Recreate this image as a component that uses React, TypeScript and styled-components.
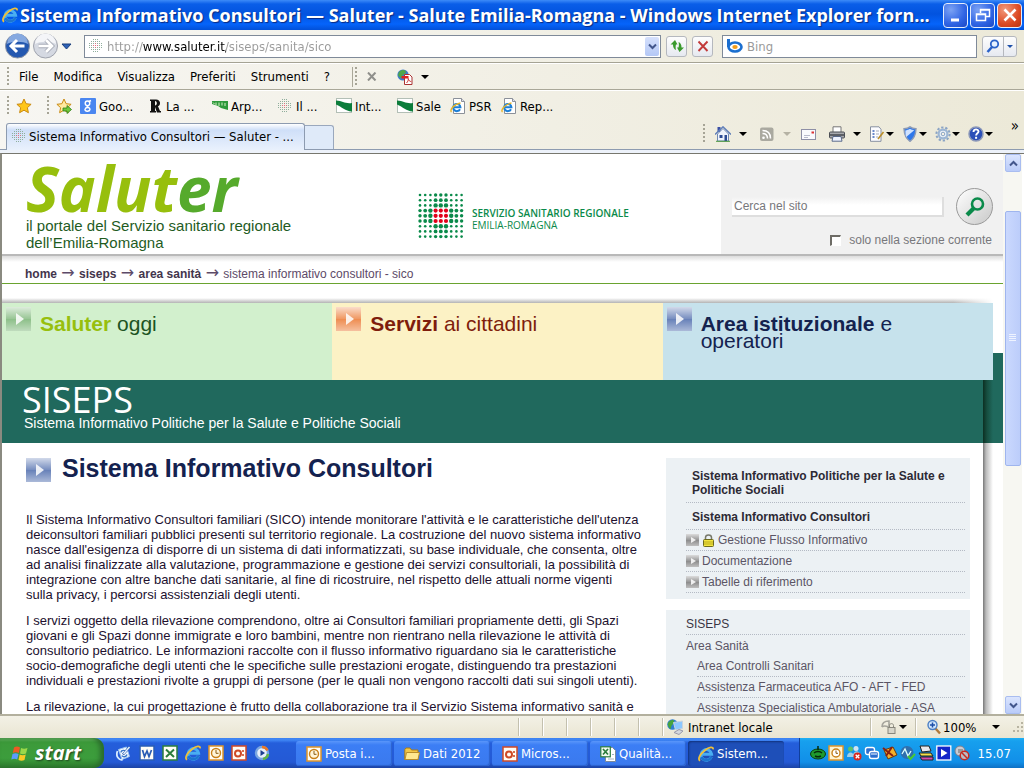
import React from 'react';
import styled, { createGlobalStyle } from 'styled-components';

const UI_FONT = '"DejaVu Sans Condensed", "DejaVu Sans", "Noto Sans", sans-serif';
const WEB_FONT = '"Liberation Sans", Arial, sans-serif';
const HUMANIST = '"Open Sans", "Noto Sans", sans-serif';

const GlobalStyle = createGlobalStyle`
  *, *::before, *::after { box-sizing: border-box; }
  html, body { margin: 0; height: 100%; }
  body { font-family: ${WEB_FONT}; font-size: 12px; overflow: hidden; }
  #root { height: 100%; }
  button, input { font: inherit; color: inherit; }
  button { padding: 0; border: 0; background: none; white-space: nowrap; }
  a { color: inherit; text-decoration: none; }
  p, h1, h2 { margin: 0; padding: 0; }
  svg { display: block; flex: none; }
`;

/* ---------- icons ---------- */

const Pic = ({ children, w = 16, h = 16 }: { children: React.ReactNode; w?: number; h?: number }) => (
  <svg width={w} height={h} viewBox={`0 0 ${w} ${h}`} aria-hidden="true">{children}</svg>
);

const Explorer = () => (
  <Pic>
    <path d="M13.300 10.800A5.300 5.300 0 1 1 13.600 8.300H4.500" fill="none" stroke="#49aef2" strokeWidth="3" />
    <path d="M13.300 10.800A5.300 5.300 0 0 1 3.500 11" fill="none" stroke="#1c74cf" strokeWidth="2.400" />
    <path d="M2.200 14.600C-.8 13.500 2 8 7 4.200 11 1 15.600 .4 15 3.400" fill="none" stroke="#efc03a" strokeWidth="1.800" />
  </Pic>
);

const IePage = () => (
  <Pic>
    <path d="M3.500 .5h8l3 3v12h-11z" fill="#fff" stroke="#8b9099" />
    <path d="M11.500 .5v3h3" fill="#dde" stroke="#8b9099" />
    <path d="M10 11.200A3.600 3.600 0 1 1 10.400 9.200H4" fill="none" stroke="#1c7fd6" strokeWidth="2" />
    <path d="M1.500 14C-.5 12.500 3 6.500 10.500 5" fill="none" stroke="#e9b52a" strokeWidth="1.400" />
  </Pic>
);

const dotRadius = (r: number, c: number) => {
  const a = Math.abs(r - 4);
  const b = Math.abs(c - 4);
  if (a <= 1 && b <= 1) return 2.1;
  if (a <= 1 || b <= 1) return [0, 0, 2.2, 1.9, 1.7][Math.max(a, b)];
  return 1.3;
};

const DotGrid = ({ size }: { size: number }) => (
  <svg width={size} height={size} viewBox="0 0 46 46" aria-hidden="true">
    {Array.from({ length: 81 }, (_, i) => {
      const r = Math.floor(i / 9);
      const c = i % 9;
      const red = Math.abs(r - 4) <= 1 && Math.abs(c - 4) <= 1;
      return (
        <circle key={i} cx={2 + c * 5.2} cy={2 + r * 5.2} r={dotRadius(r, c)} fill={red ? '#e2001a' : '#0a8a4a'} />
      );
    })}
  </svg>
);

const FaintDots = () => (
  <Pic>
    {Array.from({ length: 49 }, (_, i) => {
      const r = Math.floor(i / 7);
      const c = i % 7;
      const far = Math.abs(r - 3) + Math.abs(c - 3);
      if (far > 4) return null;
      return <rect key={i} x={1 + c * 2} y={1 + r * 2} width="1" height="1" fill={far < 2 ? '#e07080' : '#8fae9c'} />;
    })}
  </Pic>
);

const Star = ({ arrow }: { arrow?: boolean }) => (
  <Pic>
    <path d="M8 1l2.100 4.700 5 .6-3.700 3.400 1 5L8 12.200 3.600 14.700l1-5L.9 6.300l5-.6z" fill={arrow ? '#ffe9a0' : '#ffc61a'} stroke="#c98a12" />
    {arrow && <path d="M7 10h4V7.500l4.500 4-4.500 4V13H7z" fill="#6fc73b" stroke="#2f7d18" strokeWidth=".8" />}
  </Pic>
);

const Google = () => (
  <Pic>
    <rect width="16" height="16" rx="1" fill="#4a86f0" />
    <circle cx="7.500" cy="5.300" r="2.300" fill="none" stroke="#fff" strokeWidth="1.400" />
    <path d="M9 3.500l2-1M7.500 7.500c-2 1.500 3 1.500 2.500 4s-5.500 2-5 0 3-2 4-1.800" fill="none" stroke="#fff" strokeWidth="1.400" />
  </Pic>
);

const Repubblica = () => (
  <Pic>
    <path fillRule="evenodd" d="M3 1.500h6c5 0 5 6 2 6.800L13 13h1v1.500h-4L8 9v4h1v1.500H3V13h1V3H3zM8 3v4.500c2.500 0 2.500-4.500 0-4.500z" fill="#111" />
  </Pic>
);

const Arpa = () => (
  <Pic>
    <path d="M0 3h16v9L9 10 6 8 0 6z" fill="#2f9a3c" />
    <path d="M1 4.500l1.500 1.500M4 4.500v3M7 4.500v3.500M10 4.500v3M13 5v3" stroke="#d7f0c8" />
  </Pic>
);

const Region = () => (
  <Pic>
    <rect x=".5" y=".5" width="15" height="14" fill="#fff" stroke="#b3bfb6" />
    <path d="M0 2.500C7 3 9 6 16 5v8.500C9 13 6 9 0 6.500z" fill="#0c7d3b" />
  </Pic>
);

const Lens = () => (
  <Pic>
    <circle cx="9.500" cy="6" r="3.700" fill="#e6f1ff" stroke="#2b62c8" strokeWidth="1.800" />
    <path d="M7 9l-4.500 5" stroke="#2b62c8" strokeWidth="2.600" />
  </Pic>
);

const ZoomLens = () => (
  <Pic>
    <path d="M9.500 9.500l4.500 5" stroke="#b07a3a" strokeWidth="2.400" />
    <circle cx="6.500" cy="6" r="4.500" fill="#cfe4fb" stroke="#4b7fc4" strokeWidth="1.400" />
    <path d="M6.500 3.500v5M4 6h5" stroke="#1d4fa8" strokeWidth="1.500" />
  </Pic>
);

const Bing = () => (
  <Pic w={18}>
    <path d="M2.500 1v8" stroke="#1b6fd0" strokeWidth="3" />
    <ellipse cx="9" cy="9" rx="6.500" ry="4.500" fill="#fff" stroke="#1b6fd0" strokeWidth="2.600" />
    <ellipse cx="9" cy="9" rx="2.700" ry="2" fill="#f39c1a" />
  </Pic>
);

const House = () => (
  <Pic>
    <path d="M2.500 1h3v5h-3z" fill="#3b4fa5" />
    <path d="M2.500 8L8 2.500 13.500 8v7h-11z" fill="#eef3fc" stroke="#6f88b5" />
    <path d="M0 8.500L8 .8l8 7.700" fill="none" stroke="#5e7db8" strokeWidth="1.400" />
    <path d="M4.500 9h3v3h-3zM9.500 9h2.500v6H9.500z" fill="#2b4b93" />
    <path d="M1 15.300h14" stroke="#4c9a3a" />
  </Pic>
);

const Rss = () => (
  <Pic>
    <rect x="1" y="1.500" width="13.500" height="13.500" rx="2" fill="#aaa9a0" />
    <circle cx="4.500" cy="11.800" r="1.300" fill="#fff" />
    <path d="M3.500 7.500c3 0 5 2 5 5M3.500 4.500c5 0 8 3 8 8" fill="none" stroke="#fff" strokeWidth="1.500" />
  </Pic>
);

const Mail = () => (
  <Pic>
    <rect x=".5" y="3.500" width="14" height="10" fill="#fafafd" stroke="#8e8fa6" />
    <path d="M10.500 5.500h2.500v2h-2.500z" fill="#d33" />
    <path d="M3 9.500h6M3 11.500h4" stroke="#b9bbcc" />
  </Pic>
);

const Printer = () => (
  <Pic>
    <path d="M4 6V.8h8V6" fill="#fff" stroke="#777" />
    <rect x=".5" y="6" width="15" height="6" rx="1" fill="#a7a9ad" stroke="#4b4e55" />
    <path d="M1 9h14" stroke="#45484f" strokeWidth="1.500" />
    <path d="M4 10.500h8l1 4.700H3z" fill="#f0f4ff" stroke="#5a6a8a" />
  </Pic>
);

const PageIcon = () => (
  <Pic>
    <path d="M1.500 .8h8.500l2 2.500v12H1.500z" fill="#fcfcff" stroke="#8890a0" />
    <path d="M3.500 5h2M3.500 8h2M3.500 11h2" stroke="#3a62b8" strokeWidth="1.400" />
    <path d="M7 5h3M7 8h3M7 11h2" stroke="#a5abb8" />
    <path d="M9 13l5.500-7" stroke="#b98d2a" strokeWidth="1.600" />
  </Pic>
);

const Shield = () => (
  <Pic>
    <path d="M8 .8c2 1.700 4 2 6 2-.2 6-1.500 9.500-6 12.500C3.500 12.300 2.200 8.800 2 2.800c2 0 4-.3 6-2z" fill="#2f78ea" stroke="#8d9bb5" strokeWidth="1.400" />
    <path d="M8 2.800c1.500 1 2.700 1.300 4.200 1.500L4.200 11C3.700 9 3.400 7 3.400 4.400 5 4.200 6.500 3.800 8 2.800z" fill="#cfe2ff" />
  </Pic>
);

const Gear = () => (
  <Pic>
    <circle cx="8" cy="8" r="6.600" fill="none" stroke="#8ba4c4" strokeWidth="2" strokeDasharray="2.300 1.850" />
    <circle cx="8" cy="8" r="4.400" fill="#eef4fa" stroke="#9db6d4" strokeWidth="2.200" />
    <circle cx="8" cy="8" r="1.800" fill="#f5f2e6" stroke="#8ba4c4" />
  </Pic>
);

const Help = () => (
  <Pic>
    <circle cx="8" cy="8" r="7" fill="#2c50b8" stroke="#8c98b8" strokeWidth="1.500" />
    <path d="M5.500 6c0-3.500 5-3.200 5-.5 0 1.800-2.400 1.800-2.400 4" fill="none" stroke="#fff" strokeWidth="1.900" />
    <path d="M7.100 10.800h2v2h-2z" fill="#fff" />
  </Pic>
);

const GlobePdf = () => (
  <Pic>
    <circle cx="6" cy="6" r="5.600" fill="#3c7bc8" />
    <path d="M2 3c3-3 7-2 7 0S5 5 5 8 1 7 1 6z" fill="#4ea64a" />
    <path d="M7.500 5.500h5l2.500 2.500v7.500H7.500z" fill="#fff" stroke="#a33" />
    <path d="M4.500 7h7v2.500h-7z" fill="#d22" />
    <path d="M9.500 14c1.500-1.500 2-3 1.700-4.500.5 2 1.500 3 3 3" fill="none" stroke="#c33" />
  </Pic>
);

const Windows = () => (
  <Pic w={19} h={17}>
    <path d="M3 2.500c2-1.200 4-1.200 6 0L7.800 8C6 7 4 7 1.800 8z" fill="#ee5a24" />
    <path d="M10 3c2 1 4 1 6.500 0L15 8.500c-2 1-4 1-6 0z" fill="#9bd84a" />
    <path d="M1.500 9c2-1 4-1 6 0l-1.300 5.500C4.500 13.500 2.500 13.500.3 14.500z" fill="#5a9cff" />
    <path d="M8.700 9.500c2 1 4 1 6 0L13.500 15c-2 1-4 1-6 0z" fill="#fbc926" />
  </Pic>
);

const Office = ({ kind }: { kind: 'word' | 'excel' | 'outlook' | 'point' }) => {
  const tone = { word: '#2a5db4', excel: '#2c7d3c', outlook: '#e0952a', point: '#cf4a26' }[kind];
  return (
    <Pic>
      <rect x="1" y="1" width="14" height="14" fill="#fffdf6" stroke={tone} strokeWidth="1.500" />
      {kind === 'word' && <path d="M3.500 5l2 6.500L8 6l2 5.500L12.500 5" fill="none" stroke={tone} strokeWidth="1.700" />}
      {kind === 'excel' && <path d="M4 4.500l8 7.500M12 4.500L4 12" stroke={tone} strokeWidth="2" />}
      {kind === 'outlook' && (
        <>
          <circle cx="8" cy="8" r="4.500" fill="#fff6da" stroke="#c98018" strokeWidth="1.400" />
          <path d="M8 5v3.300h2.500" fill="none" stroke="#8a5a10" />
        </>
      )}
      {kind === 'point' && (
        <>
          <circle cx="7" cy="8.500" r="3" fill="none" stroke={tone} strokeWidth="2" />
          <path d="M12 5v2M12 9v2" stroke={tone} strokeWidth="1.600" />
        </>
      )}
    </Pic>
  );
};

const ExcelFile = () => (
  <Pic>
    <path d="M5.500 1.500h7l3 3v11h-10z" fill="#fff" stroke="#7d8a9a" />
    <rect x=".8" y=".8" width="9.500" height="10" fill="#f4fbf2" stroke="#2c7d3c" strokeWidth="1.200" />
    <path d="M3 3l5 5.500M8 3L3 8.500" stroke="#2c7d3c" strokeWidth="1.700" />
    <path d="M8 13h6M12 8.500h2" stroke="#9fb0c0" />
  </Pic>
);

const Folder = () => (
  <Pic>
    <path d="M.8 13.500V3.500L2 2h4l1.500 2H14v9.500z" fill="#f3c747" stroke="#a87c1a" />
    <path d="M1 13.500l1.500-7h13l-1.500 7z" fill="#ffe890" stroke="#b98d2a" />
  </Pic>
);

const Desktop = () => (
  <Pic>
    <path d="M2.500 4.500L10.500 2l3 9.500L6 14.500z" fill="#f5fbff" stroke="#9cc5f0" />
    <path d="M5 7.500c0-2.500 4.500-3 5-.5M6 10.500c1 2 4.500 1.500 5-1" fill="none" stroke="#3b78c8" strokeWidth="1.400" />
    <path d="M7 9.500L13.500 2" stroke="#2b5aa8" strokeWidth="2.600" />
    <path d="M7.500 9L13.500 2" stroke="#e2f1ff" strokeWidth="1.500" />
    <path d="M1.500 6c-2 5 1 9 5 9" fill="none" stroke="#d8ecff" strokeWidth="1.800" />
  </Pic>
);

const Player = () => (
  <Pic>
    <circle cx="8" cy="8" r="6" fill="#e8f0fb" stroke="#7aa6e0" strokeWidth="2.400" />
    <path d="M8 2a6 6 0 0 1 5.500 3.500" fill="none" stroke="#e8792a" strokeWidth="2.400" />
    <path d="M14 9a6 6 0 0 1-5 5" fill="none" stroke="#62b545" strokeWidth="2.400" />
    <path d="M6.500 5l4.500 3-4.500 3z" fill="#1d3f90" />
  </Pic>
);

const Network = () => (
  <Pic w={17}>
    <circle cx="5.500" cy="5.500" r="5.300" fill="#2f7fd0" />
    <path d="M1 4c2-3 6-4 6-1.500S4 6 4 9 0 6.500 1 4z" fill="#46a43c" />
    <path d="M6.500 3.500l9-1.500v7.500l-7 1.500z" fill="#8cc8ff" stroke="#c9d4de" />
    <path d="M7 13.500l5-3 4 1.500-4 3.500z" fill="#d5d8de" stroke="#99a" />
  </Pic>
);

const PhishLock = () => (
  <Pic>
    <path d="M1 8C1 4 4 2 8 2v5M1 8c2-2 4-1 7 0" fill="none" stroke="#a5a49c" strokeWidth="1.600" />
    <rect x="7" y="8.500" width="7" height="6" fill="#d8d6ca" stroke="#88877c" />
    <path d="M8.500 8.500v-2c0-2.500 4-2.500 4 0v2" fill="none" stroke="#88877c" />
  </Pic>
);

const Padlock = () => (
  <Pic w={13} h={13}>
    <path d="M3.500 6V3.500c0-3.500 6-3.500 6 0V6" fill="none" stroke="#77796a" strokeWidth="1.500" />
    <rect x="1.500" y="5.500" width="10" height="7" rx="1" fill="#f3e63e" stroke="#6c6a1c" />
    <path d="M2 8h9M2 10h9" stroke="#b8a91e" />
  </Pic>
);

const SizeGrip = () => (
  <Pic w={12} h={12}>
    {[[9, 1], [5, 5], [9, 5], [1, 9], [5, 9], [9, 9]].map(([x, y]) => (
      <rect key={`${x}-${y}`} x={x} y={y} width="2" height="2" fill="#b8b4a2" />
    ))}
  </Pic>
);

const trayIcons: React.ReactNode[] = [
  <><ellipse cx="8" cy="9" rx="7.500" ry="5" fill="#1f9a2e" stroke="#0a3d10" /><path d="M4 8c2-2 6-2 8 0M5 11c2 1 4 1 6 0M8 1v4" fill="none" stroke="#062a0a" strokeWidth="1.500" /></>,
  <><rect x="1" y="1" width="14" height="14" fill="#fff3cf" stroke="#e0952a" strokeWidth="1.500" /><circle cx="8" cy="8" r="4" fill="#fff" stroke="#c98018" strokeWidth="1.400" /><path d="M8 5.500v2.800h2" fill="none" stroke="#8a5a10" /></>,
  <><circle cx="4.500" cy="4" r="2.500" fill="#5cc06a" /><circle cx="10" cy="3.500" r="2.500" fill="#cfe4f5" /><path d="M1 12c0-6 7-6 7 0zM7 11c0-6 7-6 7-1z" fill="#9fd0e8" /><circle cx="11.500" cy="11.500" r="4" fill="#d9261c" /><path d="M9.700 9.700l3.600 3.600M13.300 9.700l-3.600 3.600" stroke="#fff" strokeWidth="1.300" /></>,
  <><rect x="1.500" y="2.500" width="9" height="7" rx="2" fill="#2b6fd0" stroke="#fff" strokeWidth="1.400" /><rect x="5.500" y="6.500" width="9" height="7" rx="2" fill="#2b6fd0" stroke="#fff" strokeWidth="1.400" /><path d="M7 9h6" stroke="#fff" /></>,
  <><path d="M2 5l9-3 4 8-9 4z" fill="#f2b02c" stroke="#6c3c0c" /><path d="M1 3l10 8M10 2L4 11" stroke="#8a1f10" strokeWidth="2" /></>,
  <><circle cx="7" cy="7.500" r="6.500" fill="#2f6fae" /><path d="M2 9l3-5 3 7 3-5" fill="none" stroke="#dff" strokeWidth="1.300" /><path d="M8 11l2.500 3L15 9" fill="none" stroke="#48c832" strokeWidth="2" /></>,
  <><path d="M2 1h9l2 5-9 1z" fill="#e9e9ee" stroke="#222" /><path d="M1 8h12l2 3H3z" fill="#f3e04a" stroke="#222" /><path d="M2 12h13v3H4z" fill="#d64ab0" stroke="#222" /></>,
  <><rect x=".8" y="1" width="14" height="14" fill="#1424c8" stroke="#fff" strokeWidth="1.300" /><path d="M5 4l6.500 4L5 12z" fill="#fff" /></>,
  <><circle cx="6" cy="6" r="5" fill="#c9ccd4" stroke="#7a7e8a" /><path d="M4 5h5M4 7h4" stroke="#666" /><circle cx="10.500" cy="10.500" r="4.300" fill="#b9bcc6" stroke="#c62a20" strokeWidth="1.500" /><path d="M7.800 7.800l5.400 5.400" stroke="#c62a20" strokeWidth="1.500" /></>,
];

const Caret = styled.span<{ $faint?: boolean }>`
  flex: none;
  width: 0;
  height: 0;
  border: 4px solid transparent;
  border-bottom: 0;
  border-top-color: ${(p) => (p.$faint ? '#b5b2a4' : '#000')};
`;

/* ---------- browser frame ---------- */

const Window = styled.div`
  display: flex;
  flex-direction: column;
  height: 100vh;
  overflow: hidden;
  background: #ece9d8;
  font-family: ${UI_FONT};
  font-size: 13px;
  color: #000;
`;

const TitleBar = styled.header`
  display: flex;
  align-items: center;
  gap: 2px;
  flex: none;
  height: 30px;
  padding: 0 2px;
  background: linear-gradient(#3d8bf8 0, #0a5ee8 4px, #0253df 14px, #0564fb 24px, #0250d8 30px);
`;

const Caption = styled.h1`
  flex: 1;
  min-width: 0;
  overflow: hidden;
  white-space: nowrap;
  font: bold 18px/28px ${HUMANIST};
  color: #fff;
  text-shadow: 1px 1px 1px #0a2a80;
`;

const CaptionButton = styled.button<{ $close?: boolean }>`
  display: grid;
  place-items: center;
  flex: none;
  width: 25px;
  height: 25px;
  border: 1px solid #e6eefc;
  border-radius: 4px;
  background: ${(p) =>
    p.$close ? 'radial-gradient(circle at 30% 25%, #f29a7c, #dc4a24 60%, #b83212)' : 'radial-gradient(circle at 30% 25%, #7ba2f4, #2f64e4 60%, #1c48c4)'};
`;

const AddressRow = styled.div`
  display: flex;
  align-items: center;
  gap: 5px;
  flex: none;
  height: 33px;
  padding: 0 7px 0 5px;
  border-bottom: 1px solid #a5a394;
  background: linear-gradient(to right, #f7f7f4, #ece9d8);
`;

const NavButtons = styled.div`
  display: flex;
  align-items: center;
  gap: 3px;
  width: 74px;
`;

const Field = styled.div<{ $fixed?: boolean }>`
  display: flex;
  align-items: center;
  gap: 3px;
  flex: ${(p) => (p.$fixed ? '0 1 255px' : '1 1 0')};
  min-width: 0;
  height: 23px;
  margin-left: ${(p) => (p.$fixed ? 4 : 0)}px;
  padding: 0 1px 0 3px;
  border: 1px solid #7f8a99;
  background: #fff;
`;

const AddressInput = styled.input`
  flex: 1;
  min-width: 0;
  padding: 0;
  border: 0;
  outline: 0;
  -webkit-text-fill-color: transparent;
  background: linear-gradient(to right, #9a9a9a 36px, #000 36px, #000 119px, #9a9a9a 119px);
  background-clip: text;
  -webkit-background-clip: text;
`;

const BingInput = styled.input`
  flex: 1;
  min-width: 0;
  padding: 0;
  border: 0;
  outline: 0;
  background: none;
  &::placeholder { color: #9a9a9a; opacity: 1; }
`;

const DropButton = styled.button`
  display: grid;
  place-items: center;
  width: 14px;
  height: 19px;
  border-radius: 2px;
  background: linear-gradient(#d5e0fc, #b4c8f6);
`;

const SmallButton = styled.button`
  display: grid;
  place-items: center;
  flex: none;
  width: 21px;
  height: 21px;
  border: 1px solid #b5b8be;
  border-radius: 3px;
  background: linear-gradient(#fdfdfd, #e6e9f0);
`;

const SplitButton = styled(SmallButton)`
  grid-template-columns: 20px 1fr;
  width: 35px;
  background: linear-gradient(#b5b8be, #b5b8be) no-repeat 20px 0 / 1px 100%, linear-gradient(#fdfdfd, #e6e9f0);
  & > :last-child { justify-self: center; border-width: 3px 3px 0; border-top-color: #1d4fa8; }
`;

const Gap = styled.span<{ $w?: number }>`
  flex: none;
  width: ${(p) => p.$w ?? 3}px;
`;

const MenuRow = styled.nav`
  display: flex;
  align-items: center;
  flex: none;
  height: 27px;
  padding-left: 4px;
  border-top: 1px solid #fff;
  border-bottom: 1px solid #a9a798;
  background: linear-gradient(to right, #f7f6f2, #ece9d8);
`;

const MenuButton = styled.button`
  margin-right: 15px;
`;

const Grip = styled.span<{ $line?: boolean }>`
  flex: none;
  width: 5px;
  height: 20px;
  margin-right: 10px;
  border-left: ${(p) => (p.$line ? '1px solid #a9a798' : '0')};
  background: repeating-linear-gradient(#a6a496 0 2px, transparent 2px 4px) no-repeat right / 2px 100%;
`;

const ToolButton = styled.button<{ $gap?: number; $space?: number }>`
  display: flex;
  align-items: center;
  gap: ${(p) => p.$space ?? 1}px;
  flex: none;
  margin-left: ${(p) => p.$gap ?? 0}px;
`;

const FavoritesRow = styled.nav`
  display: flex;
  align-items: center;
  flex: none;
  height: 33px;
  padding: 0 0 2px 4px;
  border-top: 1px solid #fff;
  background: linear-gradient(to right, #f7f6f2, #ece9d8);
`;

const Favorite = styled.a<{ $w: number }>`
  display: flex;
  align-items: center;
  gap: 3px;
  width: ${(p) => p.$w}px;
  white-space: nowrap;
`;

const TabRow = styled.div`
  display: flex;
  align-items: flex-end;
  flex: none;
  height: 27px;
  padding-left: 6px;
  border-bottom: 1px solid #8d9bb0;
  background: linear-gradient(to right, #f7f6f2, #ece9d8);
`;

const TabStrip = styled.div`
  flex: none;
  height: 3px;
  background: #edf2fa;
`;

const Tab = styled.button`
  display: flex;
  align-items: center;
  gap: 2px;
  width: 299px;
  height: 27px;
  margin-bottom: -1px;
  padding: 0 0 2px 4px;
  border: 1px solid #8d9bb0;
  border-bottom: 0;
  border-radius: 3px 3px 0 0;
  background: linear-gradient(#fff, #cfdff8 6px, #e9f1fd);
`;

const NewTab = styled.button`
  width: 29px;
  height: 24px;
  border: 1px solid #9aa8bd;
  border-left: 0;
  border-bottom: 0;
  border-radius: 0 3px 0 0;
  background: #dfeaf9;
`;

const Commands = styled.div`
  display: flex;
  align-items: center;
  align-self: flex-start;
  margin-left: auto;
  height: 22px;
  padding-right: 5px;
`;

const Chevrons = styled.button`
  align-self: flex-start;
  margin: -6px 0 0 18px;
  font-size: 15px;
  line-height: 18px;
`;

const ViewFrame = styled.div`
  display: flex;
  flex: 1;
  min-height: 0;
  padding-right: 2px;
  border-top: 1px solid #77776e;
  border-left: 2px solid #8a8a80;
  background: #fff;
`;

const ScrollBar = styled.div`
  display: flex;
  flex-direction: column;
  flex: none;
  width: 19px;
  padding: 0 1px 0 2px;
  background: #f7f7f2;
`;

const ScrollButton = styled.button`
  display: grid;
  place-items: center;
  flex: none;
  height: 18px;
  border: 1px solid #a9bdf0;
  border-radius: 2px;
  background: linear-gradient(#dbe5fe, #b9cbf9);
`;

const ScrollSpace = styled.span<{ $share: number }>`
  flex: ${(p) => p.$share} 1 0;
`;

const ScrollThumb = styled.div`
  display: grid;
  place-items: center;
  flex: 254 1 0;
  border: 1px solid #9fb5ee;
  border-radius: 2px;
  background: linear-gradient(to right, #cad8fe, #bccdfa);
`;

/* ---------- web page ---------- */

const Page = styled.div`
  flex: 1;
  min-width: 0;
  overflow: hidden;
  background: #fff;
  font-family: ${WEB_FONT};
  font-size: 12px;
`;

const SiteHeader = styled.header`
  display: flex;
  height: 102px;
  padding-top: 6px;
  border-bottom: 2px solid #b9b9b9;
`;

const Brand = styled.a`
  flex: 0 0 392px;
  margin-left: 24px;
  color: #1f5c1f;
  font-size: 15px;
  line-height: 17px;
`;

const BrandName = styled.span`
  display: block;
  height: 57px;
  font: italic bold 62px/57px ${HUMANIST};
  color: #97bf0d;
  & > span { color: #56aa2c; }
`;

const Service = styled.a`
  display: flex;
  gap: 8px;
  margin: 33px auto 0 0;
  font: 10px/12px ${HUMANIST};
  color: #0a8a4a;
  & > span { margin-top: 14px; white-space: nowrap; }
  b { font-weight: 600; }
`;

const SearchBox = styled.form`
  display: grid;
  grid-template-columns: 1fr 36px;
  align-content: start;
  column-gap: 12px;
  row-gap: 8px;
  align-items: center;
  width: 282px;
  padding: 28px 11px 0 11px;
  background: #f1f1f1;
  color: #77777b;
`;

const SearchInput = styled.input`
  min-width: 0;
  height: 20px;
  padding: 0 2px;
  border: 0;
  border-right: 2px solid #dedede;
  border-bottom: 2px solid #dedede;
  background: linear-gradient(#f1f1f1, #fff 8px);
  outline: 0;
  &::placeholder { color: #77777b; opacity: 1; }
`;

const SearchGo = styled.button`
  display: grid;
  place-items: center;
  width: 37px;
  height: 37px;
  border: 1px solid #9a9a9a;
  border-radius: 50%;
  background: linear-gradient(135deg, #fff, #c9c9c9);
`;

const OnlyHere = styled.label`
  display: flex;
  grid-column: 1 / -1;
  align-items: center;
  justify-content: flex-end;
  gap: 8px;
  line-height: 14px;
`;

const Tick = styled.input`
  appearance: none;
  width: 11px;
  height: 11px;
  margin: 0;
  border: 1px solid #fff;
  border-top: 2px solid #6e6c66;
  border-left: 2px solid #6e6c66;
  background: #fff;
`;

const Crumbs = styled.nav`
  height: 28px;
  padding: 9px 0 0 23px;
  border-bottom: 1px solid #6aa32f;
  background: linear-gradient(#dcdcdc, #fff 6px);
  line-height: 18px;
  color: #5d4a68;
  & b { color: #43354c; }
`;

const CrumbArrow = styled.span`
  margin: 0 1px;
  font: 16px/16px "DejaVu Sans", sans-serif;
`;

const AreaNav = styled.nav`
  display: grid;
  grid-template-columns: 1fr 1fr 1fr;
  margin-top: 14px;
  padding: 5px 10px 0 0;
  background:
    linear-gradient(transparent 55px, #20695d 55px) no-repeat right / 10px 100%,
    linear-gradient(to right, transparent, #fff) no-repeat right 10px top / 40px 5px,
    linear-gradient(#fff, #b4b4b4) no-repeat left top / calc(100% - 10px) 5px;
`;

const Area = styled.a<{ $bg: string; $fg: string; $lead: string }>`
  display: grid;
  grid-template-columns: 25px 1fr;
  column-gap: 9px;
  align-items: start;
  height: 77px;
  padding: 4px;
  background: ${(p) => p.$bg};
  color: ${(p) => p.$fg};
  font-size: 21px;
  line-height: 17px;
  & > span { margin-top: 8px; }
  b { color: ${(p) => p.$lead}; }
`;

const Arrow = styled.i<{ $tone: string; $small?: boolean }>`
  display: grid;
  place-items: center;
  flex: none;
  width: ${(p) => (p.$small ? 13 : 25)}px;
  height: ${(p) => (p.$small ? 12 : 24)}px;
  background: linear-gradient(rgba(255, 255, 255, 0.7), rgba(255, 255, 255, 0.1) 50%, transparent 50%, rgba(255, 255, 255, 0.45)), ${(p) => p.$tone};
  &::after {
    content: '';
    margin-left: 2px;
    border: ${(p) => (p.$small ? 3 : 6)}px solid transparent;
    border-left: ${(p) => (p.$small ? 5 : 8)}px solid rgba(255, 255, 255, 0.85);
    border-right: 0;
  }
`;

const Sheet = styled.div`
  background: linear-gradient(to right, #777, #bbb 3px, rgba(255, 255, 255, 0)) no-repeat right 10px top / 10px 100%;
`;

const Band = styled.div`
  height: 63px;
  padding: 2px 22px 0 20px;
  background:
    linear-gradient(to right, #0c2f22, #164e40 4px, #20695d) no-repeat right 10px top / 10px 100%,
    #20695d;
  color: #fff;
  font-size: 14px;
  line-height: 14px;
  & > p { padding-left: 2px; }
`;

const BandTitle = styled.div`
  height: 34px;
  font: 36px/36px ${HUMANIST};
`;

const Columns = styled.div`
  display: grid;
  grid-template-columns: minmax(0, 1fr) 304px;
  gap: 22px;
  padding: 15px 33px 0 24px;
`;

const Article = styled.main`
  color: #21102e;
  font-size: 13px;
  line-height: 15px;
  white-space: nowrap;
  & > p { margin-bottom: 11px; }
`;

const ArticleTitle = styled.h2`
  display: flex;
  align-items: flex-start;
  gap: 11px;
  margin-bottom: 30px;
  font-size: 25px;
  line-height: 20px;
  color: #14224f;
`;

const SideBox = styled.section`
  margin-bottom: 11px;
  padding: 4px 5px 6px 20px;
  background: #ecf1f4;
  color: #5b5565;
`;

const SideHead = styled.a`
  display: block;
  padding: 7px 6px 5px;
  border-bottom: 1px dotted #b4bac4;
  font-weight: bold;
  line-height: 14px;
  color: #2c2a35;
`;

const SideLink = styled.a<{ $dark?: boolean; $deep?: boolean; $plain?: boolean }>`
  display: flex;
  align-items: center;
  gap: 3px;
  height: 21px;
  margin-left: ${(p) => (p.$deep ? 11 : 0)}px;
  border-bottom: ${(p) => (p.$plain ? '0' : '1px dotted #b4bac4')};
  white-space: nowrap;
  color: ${(p) => (p.$dark ? '#3a3644' : 'inherit')};
`;

/* ---------- status bar and taskbar ---------- */

const StatusBar = styled.footer`
  display: flex;
  align-items: center;
  justify-content: flex-end;
  flex: none;
  height: 24px;
  border-top: 2px solid #b3b09e;
  background: linear-gradient(#f3f1e6, #e9e5d2);
`;

const StatusCell = styled.div<{ $w: number }>`
  display: flex;
  align-items: center;
  gap: 4px;
  width: ${(p) => p.$w}px;
  height: 18px;
  padding-left: 4px;
  border-left: 1px solid #c3c0ae;
  box-shadow: inset 1px 0 #fff;
`;

const StatusButton = styled.button`
  display: flex;
  flex: 1;
  align-items: center;
  gap: 1px;
  padding: 0 8px 0 6px;
  & > :last-child { margin-left: auto; }
`;

const TaskBar = styled.footer`
  display: flex;
  align-items: stretch;
  flex: none;
  height: 30px;
  background: linear-gradient(#3c81f0 0, #3f86f5 2px, #245edb 5px, #2459d5 24px, #1c43a4);
  color: #fff;
`;

const Start = styled.button`
  display: flex;
  align-items: center;
  gap: 5px;
  width: 104px;
  padding-left: 11px;
  border-radius: 0 10px 10px 0;
  background: linear-gradient(#6fbf6a 0, #3c9a3a 4px, #3c9d3c 20px, #2c7a2c);
  box-shadow: inset -4px 0 5px #2a6b2c;
  font: italic bold 20px/28px ${HUMANIST};
  color: #fff;
  text-shadow: 1px 1px 2px #1c3f1c;
`;

const Quick = styled.div`
  display: flex;
  align-items: center;
  gap: 7px;
  width: 192px;
  padding-left: 12px;
`;

const Task = styled.button<{ $on?: boolean }>`
  display: flex;
  align-items: center;
  gap: 3px;
  width: 96px;
  height: 25px;
  margin: 3px 2px 0 0;
  padding-left: 10px;
  border-radius: 3px;
  color: #fff;
  background: ${(p) => (p.$on ? '#1e4fb8' : 'linear-gradient(#5a96fa, #3c7ef5 4px, #3a79ee)')};
  box-shadow: ${(p) => (p.$on ? 'inset 1px 1px 2px #12337c' : 'inset -1px -1px 1px #2c62cc')};
`;

const Tray = styled.div`
  display: flex;
  align-items: center;
  gap: 2px;
  margin-left: auto;
  padding: 0 13px 0 10px;
  border-left: 1px solid #0f3f9c;
  background: linear-gradient(#1fb0f4 0, #17a0ee 3px, #118fe8 24px, #0e70c4);
  & > time { margin-left: 6px; }
`;

const favorites: [string, number, React.ReactNode][] = [
  ['Goo...', 67, <Google />],
  ['La ...', 65, <Repubblica />],
  ['Arp...', 65, <Arpa />],
  ['Il ...', 59, <FaintDots />],
  ['Int...', 61, <Region />],
  ['Sale', 53, <Region />],
  ['PSR', 51, <IePage />],
  ['Rep...', 51, <IePage />],
];

const Chevron = ({ up }: { up?: boolean }) => (
  <Pic w={9} h={7}>
    <path d={up ? 'M1 5.500l3.500-3.500L8 5.500' : 'M1 1.500L4.500 5 8 1.500'} fill="none" stroke="#42568c" strokeWidth="2" />
  </Pic>
);

const tasks: [string, React.ReactNode][] = [
  ['Posta i...', <Office kind="outlook" />],
  ['Dati 2012', <Folder />],
  ['Micros...', <Office kind="point" />],
  ['Qualità...', <ExcelFile />],
  ['Sistem...', <Explorer />],
];

export default function App() {
  return (
    <Window>
      <GlobalStyle />
      <TitleBar>
        <Explorer />
        <Caption>Sistema Informativo Consultori — Saluter - Salute Emilia-Romagna - Windows Internet Explorer forn...</Caption>
        <CaptionButton aria-label="Riduci a icona">
          <Pic><path d="M3 13h8" stroke="#fff" strokeWidth="3" /></Pic>
        </CaptionButton>
        <CaptionButton aria-label="Ripristina">
          <Pic><path d="M5.500 6V2.500h9v7H11M5 3h10M1.500 7h9v6.500h-9zM1 7.500h10" fill="none" stroke="#fff" strokeWidth="1.500" /></Pic>
        </CaptionButton>
        <CaptionButton $close aria-label="Chiudi">
          <Pic><path d="M2.500 2.500l11 11M13.500 2.500l-11 11" stroke="#fff" strokeWidth="2.600" /></Pic>
        </CaptionButton>
      </TitleBar>

      <AddressRow>
        <NavButtons>
          <button aria-label="Indietro">
            <Pic w={25} h={26}>
              <circle cx="12.500" cy="13" r="12" fill="#2458b0" stroke="#8d95a5" />
              <path d="M2 11a10.500 10.500 0 0 1 21 0c-5-3-16-3-21 0z" fill="#86a9e0" />
              <path d="M12 7L6 13l6 6M6.500 13h13" fill="none" stroke="#fff" strokeWidth="3" />
            </Pic>
          </button>
          <button aria-label="Avanti">
            <Pic w={25} h={26}>
              <circle cx="12.500" cy="13" r="12" fill="#d5d9e2" stroke="#9fa3ad" />
              <path d="M2 11a10.500 10.500 0 0 1 21 0c-5-3-16-3-21 0z" fill="#f4f5f8" />
              <path d="M13 7l6 6-6 6M18.500 13h-13" fill="none" stroke="#a9adb8" strokeWidth="4.400" />
              <path d="M13 7l6 6-6 6M18.500 13h-13" fill="none" stroke="#fff" strokeWidth="2.600" />
            </Pic>
          </button>
          <button aria-label="Pagine recenti">
            <Pic w={11} h={7}><path d="M1 1h9L5.500 6z" fill="#2d62b8" stroke="#1b3f7c" /></Pic>
          </button>
        </NavButtons>
        <Field>
          <FaintDots />
          <AddressInput aria-label="Indirizzo" defaultValue="http://www.saluter.it/siseps/sanita/sico" />
          <DropButton aria-label="Mostra indirizzi"><Chevron /></DropButton>
        </Field>
        <SmallButton aria-label="Aggiorna">
          <Pic>
            <path d="M6 2L1.500 6.500H4c0 3 1 4.500 3 5.500-.5-2-.5-4 0-5.500h1.500z" fill="#3a9a2c" />
            <path d="M10.500 14L15 9.500h-2.500c0-3-1-4.500-3-5.500.5 2 .5 4 0 5.500H8z" fill="#3a9a2c" />
          </Pic>
        </SmallButton>
        <SmallButton aria-label="Interrompi">
          <Pic><path d="M3.500 3.500l9 9.500M12.500 3.500l-9 9.500" stroke="#c23a3a" strokeWidth="1.900" /></Pic>
        </SmallButton>
        <Field $fixed>
          <Bing />
          <BingInput aria-label="Cerca con Bing" placeholder="Bing" />
        </Field>
        <SplitButton aria-label="Cerca"><Lens /><Caret /></SplitButton>
      </AddressRow>

      <MenuRow>
        <Grip />
        {['File', 'Modifica', 'Visualizza', 'Preferiti', 'Strumenti', '?'].map((m) => (
          <MenuButton key={m}>{m}</MenuButton>
        ))}
        <Gap $w={7} />
        <Grip $line />
        <ToolButton aria-label="Chiudi barra">
          <Pic w={10} h={9}><path d="M1 .5l7.500 8M8.500 .5l-7.500 8" stroke="#8f8f8b" strokeWidth="2" /></Pic>
        </ToolButton>
        <ToolButton $gap={20} $space={8} aria-label="Converti in PDF"><GlobePdf /><Caret /></ToolButton>
      </MenuRow>

      <FavoritesRow>
        <Grip />
        <ToolButton $gap={-3} aria-label="Preferiti"><Star /></ToolButton>
        <Gap $w={12} />
        <Grip />
        <ToolButton $gap={-3} aria-label="Aggiungi alla barra"><Star arrow /></ToolButton>
        <Gap $w={8} />
        {favorites.map(([name, w, icon]) => (
          <Favorite key={name} $w={w} href="#">{icon}{name}</Favorite>
        ))}
      </FavoritesRow>

      <TabRow>
        <Tab><FaintDots />Sistema Informativo Consultori — Saluter - ...</Tab>
        <NewTab aria-label="Nuova scheda" />
        <Commands>
          <Grip />
          <ToolButton $space={8} aria-label="Pagina iniziale"><House /><Caret /></ToolButton>
          <ToolButton $gap={12} $space={8} aria-label="Feed"><Rss /><Caret $faint /></ToolButton>
          <ToolButton $gap={10} aria-label="Leggi posta"><Mail /></ToolButton>
          <ToolButton $gap={12} $space={8} aria-label="Stampa"><Printer /><Caret /></ToolButton>
          <ToolButton $gap={8} aria-label="Pagina"><PageIcon /><Caret /></ToolButton>
          <ToolButton $gap={8} aria-label="Sicurezza"><Shield /><Caret /></ToolButton>
          <ToolButton $gap={8} aria-label="Strumenti"><Gear /><Caret /></ToolButton>
          <ToolButton $gap={8} aria-label="Guida"><Help /><Caret /></ToolButton>
          <Chevrons aria-label="Altri comandi">»</Chevrons>
        </Commands>
      </TabRow>
      <TabStrip />

      <ViewFrame>
        <Page>
          <SiteHeader>
            <Brand href="#">
              <BrandName>Salut<span>er</span></BrandName>
              il portale del Servizio sanitario regionale<br />dell’Emilia-Romagna
            </Brand>
            <Service href="#">
              <DotGrid size={46} />
              <span><b>SERVIZIO SANITARIO REGIONALE</b><br />EMILIA-ROMAGNA</span>
            </Service>
            <SearchBox>
              <SearchInput aria-label="Cerca nel sito" placeholder="Cerca nel sito" />
              <SearchGo aria-label="Cerca" type="button">
                <Pic w={22} h={22}>
                  <circle cx="13.500" cy="8" r="5.500" fill="none" stroke="#0a8a4a" strokeWidth="2.600" />
                  <path d="M9.500 12.500L3 19" stroke="#0a8a4a" strokeWidth="4.200" />
                </Pic>
              </SearchGo>
              <OnlyHere><Tick type="checkbox" />solo nella sezione corrente</OnlyHere>
            </SearchBox>
          </SiteHeader>
          <Crumbs>
            <a href="#"><b>home</b></a> <CrumbArrow>→</CrumbArrow> <a href="#"><b>siseps</b></a> <CrumbArrow>→</CrumbArrow>{' '}
            <a href="#"><b>area sanità</b></a> <CrumbArrow>→</CrumbArrow> sistema informativo consultori - sico
          </Crumbs>
          <AreaNav>
            <Area href="#" $bg="#d2f0cd" $fg="#1d5423" $lead="#97bf0d">
              <Arrow $tone="#8cbf88" /><span><b>Saluter</b> oggi</span>
            </Area>
            <Area href="#" $bg="#fcf2c5" $fg="#7f1d0c" $lead="#7f1d0c">
              <Arrow $tone="#ee8c50" /><span><b>Servizi</b> ai cittadini</span>
            </Area>
            <Area href="#" $bg="#c6e2ec" $fg="#14224f" $lead="#14224f">
              <Arrow $tone="#6680b8" /><span><b>Area istituzionale</b> e<br />operatori</span>
            </Area>
          </AreaNav>
          <Sheet>
            <Band>
              <BandTitle>SISEPS</BandTitle>
              <p>Sistema Informativo Politiche per la Salute e Politiche Sociali</p>
            </Band>
            <Columns>
              <Article>
                <ArticleTitle><Arrow $tone="#6680b8" />Sistema Informativo Consultori</ArticleTitle>
                <p>
                  Il Sistema Informativo Consultori familiari (SICO) intende monitorare l'attività e le caratteristiche dell'utenza<br />
                  deiconsultori familiari pubblici presenti sul territorio regionale. La costruzione del nuovo sistema informativo<br />
                  nasce dall'esigenza di disporre di un sistema di dati informatizzati, su base individuale, che consenta, oltre<br />
                  ad analisi finalizzate alla valutazione, programmazione e gestione dei servizi consultoriali, la possibilità di<br />
                  integrazione con altre banche dati sanitarie, al fine di ricostruire, nel rispetto delle attuali norme vigenti<br />
                  sulla privacy, i percorsi assistenziali degli utenti.
                </p>
                <p>
                  I servizi oggetto della rilevazione comprendono, oltre ai Consultori familiari propriamente detti, gli Spazi<br />
                  giovani e gli Spazi donne immigrate e loro bambini, mentre non rientrano nella rilevazione le attività di<br />
                  consultorio pediatrico. Le informazioni raccolte con il flusso informativo riguardano sia le caratteristiche<br />
                  socio-demografiche degli utenti che le specifiche sulle prestazioni erogate, distinguendo tra prestazioni<br />
                  individuali e prestazioni rivolte a gruppi di persone (per le quali non vengono raccolti dati sui singoli utenti).
                </p>
                <p>La rilevazione, la cui progettazione è frutto della collaborazione tra il Servizio Sistema informativo sanità e</p>
              </Article>
              <aside>
                <SideBox>
                  <SideHead href="#">Sistema Informativo Politiche per la Salute e<br />Politiche Sociali</SideHead>
                  <SideHead href="#">Sistema Informativo Consultori</SideHead>
                  <SideLink href="#"><Arrow $small $tone="#8a8a8a" /><Padlock />Gestione Flusso Informativo</SideLink>
                  <SideLink href="#"><Arrow $small $tone="#8a8a8a" />Documentazione</SideLink>
                  <SideLink href="#"><Arrow $small $tone="#8a8a8a" />Tabelle di riferimento</SideLink>
                </SideBox>
                <SideBox>
                  <SideLink $dark href="#">SISEPS</SideLink>
                  <SideLink $plain href="#">Area Sanità</SideLink>
                  <SideLink $deep href="#">Area Controlli Sanitari</SideLink>
                  <SideLink $deep href="#">Assistenza Farmaceutica AFO - AFT - FED</SideLink>
                  <SideLink $deep href="#">Assistenza Specialistica Ambulatoriale - ASA</SideLink>
                </SideBox>
              </aside>
            </Columns>
          </Sheet>
        </Page>
        <ScrollBar>
          <ScrollButton aria-label="Scorri su"><Chevron up /></ScrollButton>
          <ScrollSpace $share={39} />
          <ScrollThumb>
            <Pic w={8} h={8}><path d="M0 .5h7M0 2.500h7M0 4.500h7M0 6.500h7" stroke="#eef3ff" /></Pic>
          </ScrollThumb>
          <ScrollSpace $share={231} />
          <ScrollButton aria-label="Scorri giù"><Chevron /></ScrollButton>
        </ScrollBar>
      </ViewFrame>

      <StatusBar>
        {[1, 2, 3, 4, 5, 6].map((n) => <StatusCell key={n} $w={24} />)}
        <StatusCell $w={208}><Network />Intranet locale</StatusCell>
        <StatusCell $w={45}><StatusButton aria-label="Filtro SmartScreen"><PhishLock /><Caret /></StatusButton></StatusCell>
        <StatusCell $w={109}><StatusButton><ZoomLens />100%<Caret /></StatusButton><SizeGrip /></StatusCell>
      </StatusBar>

      <TaskBar>
        <Start><Windows />start</Start>
        <Quick>
          <Desktop />
          <Office kind="word" />
          <Office kind="excel" />
          <Explorer />
          <Office kind="outlook" />
          <Office kind="point" />
          <Player />
        </Quick>
        {tasks.map(([name, icon], i) => (
          <Task key={name} $on={i === 4}>{icon}{name}</Task>
        ))}
        <Tray>
          {trayIcons.map((icon, i) => <Pic key={i}>{icon}</Pic>)}
          <time>15.07</time>
        </Tray>
      </TaskBar>
    </Window>
  );
}
